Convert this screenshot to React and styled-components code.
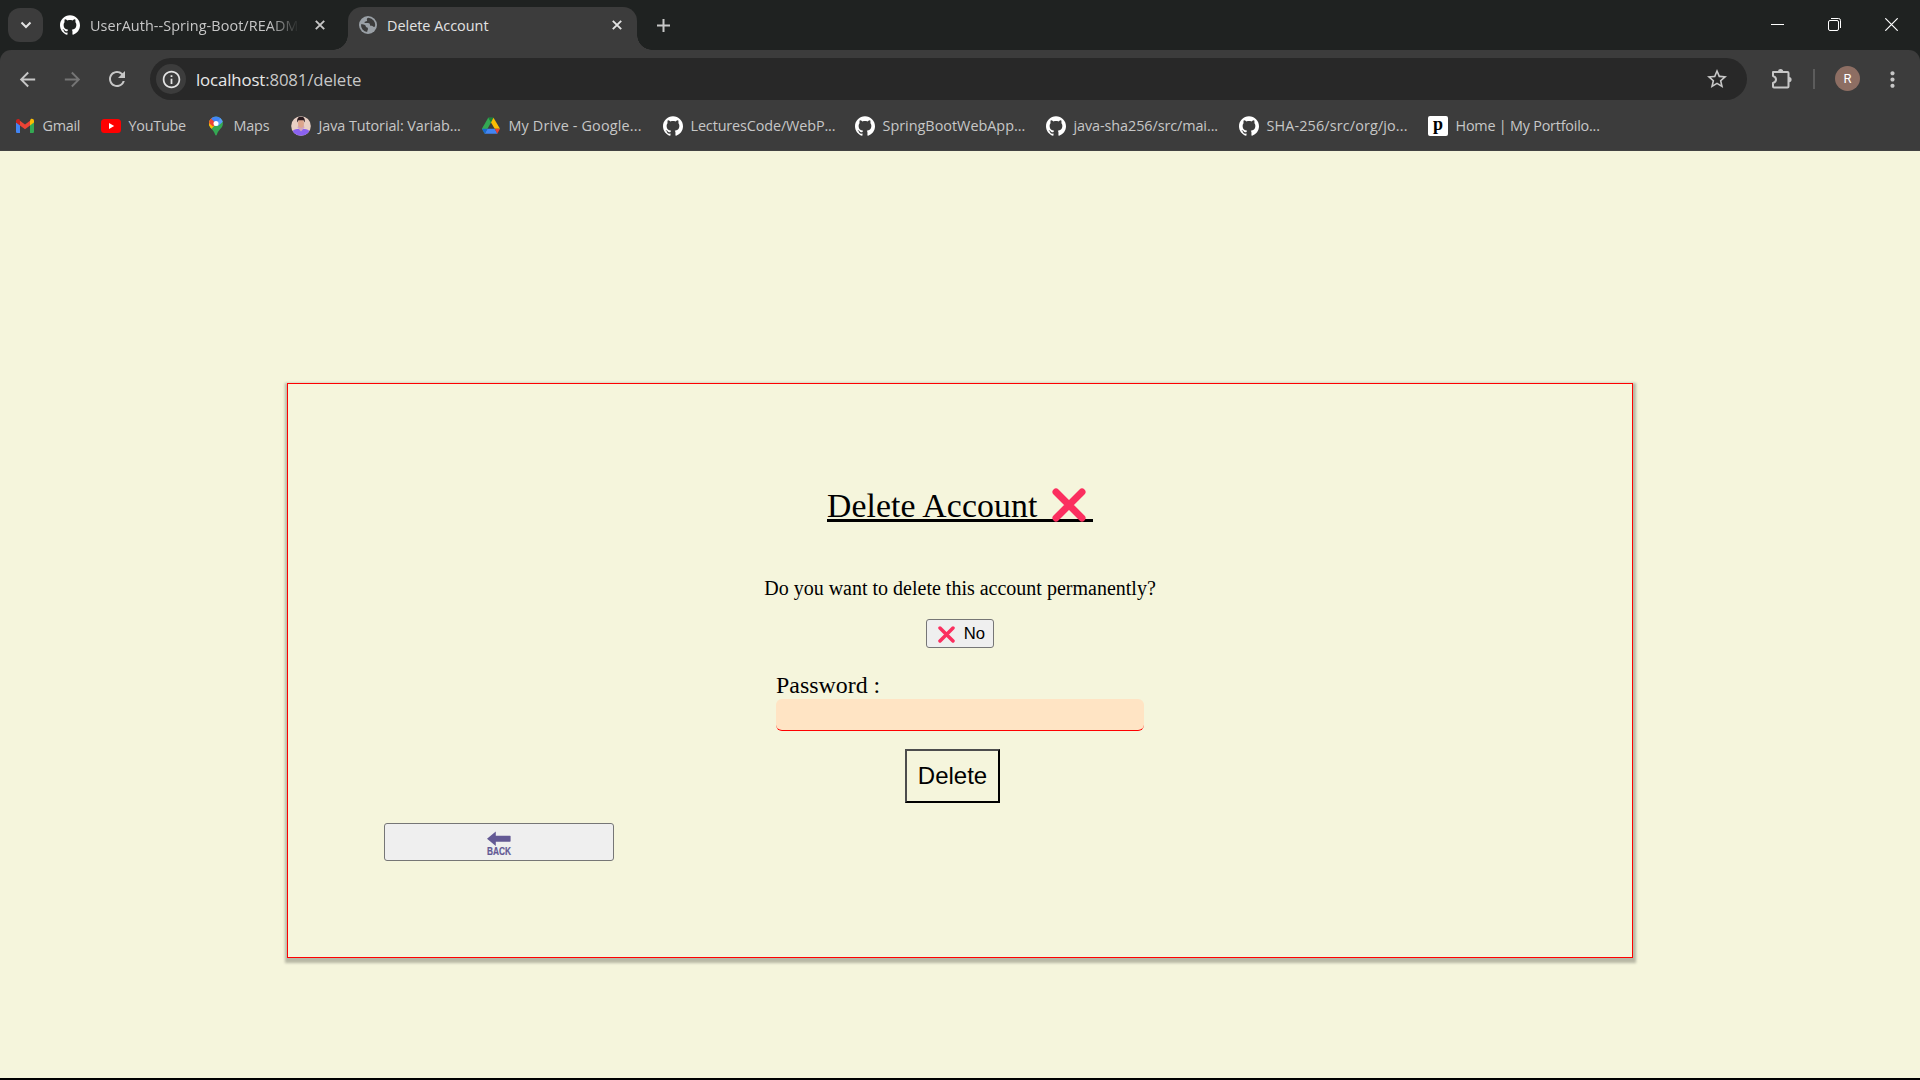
import React from "react";
import styled, { createGlobalStyle } from "styled-components";
import { SiGithub } from "react-icons/si";
import { MdArrowBack, MdArrowForward, MdRefresh, MdInfoOutline, MdStarBorder, MdMoreVert } from "react-icons/md";

const GlobalStyle = createGlobalStyle`
  *, *::before, *::after { box-sizing: border-box; }
  html, body { margin: 0; padding: 0; background: #000; }
  body { overflow: hidden; }
`;

const uiFont = `"Open Sans", "Noto Sans", sans-serif`;

const Screen = styled.div`
  width: 1920px;
  height: 1080px;
  display: flex;
  flex-direction: column;
  background: #000;
  overflow: hidden;
`;

const Chrome = styled.header`
  flex: none;
  height: 151px;
  background: #1f2221;
  font-family: ${uiFont};
  color: #c7c7c7;
`;

const TabStrip = styled.div`
  height: 50px;
  display: flex;
  padding-left: 8px;
`;

const TabSearch = styled.button`
  width: 35px;
  height: 34px;
  margin-top: 8px;
  padding: 0;
  border: 0;
  border-radius: 12px;
  background: #3c3c3c;
  display: grid;
  place-items: center;
`;

const Tab = styled.div`
  position: relative;
  display: flex;
  align-items: center;
  width: ${(p) => p.$width}px;
  height: ${(p) => (p.$active ? 43 : 50)}px;
  margin-top: ${(p) => (p.$active ? 7 : 0)}px;
  padding: ${(p) => (p.$active ? "0 10px 7px 11px" : "0 10px 0 17px")};
  background: ${(p) => (p.$active ? "#3c3c3c" : "transparent")};
  border-radius: 14px 14px 0 0;
  color: ${(p) => (p.$active ? "#e3e3e3" : "#c7c7c7")};

  &::before,
  &::after {
    content: "";
    display: ${(p) => (p.$active ? "block" : "none")};
    position: absolute;
    bottom: 0;
    width: 15px;
    height: 15px;
  }
  &::before {
    left: -15px;
    background: radial-gradient(circle at 0 0, transparent 14.5px, #3c3c3c 15px);
  }
  &::after {
    right: -15px;
    background: radial-gradient(circle at 100% 0, transparent 14.5px, #3c3c3c 15px);
  }
`;

const TabTitle = styled.span`
  flex: none;
  width: ${(p) => p.$width}px;
  margin-left: 10px;
  padding-top: 2px;
  overflow: hidden;
  white-space: nowrap;
  font-size: 14.4px;
  line-height: 24px;
  letter-spacing: ${(p) => p.$track}px;
  mask-image: ${(p) => (p.$fade ? "linear-gradient(90deg, #000 86%, transparent)" : "none")};
`;

const TabClose = styled.button`
  width: 20px;
  height: 20px;
  padding: 0;
  border: 0;
  background: transparent;
  margin-left: ${(p) => p.$gap}px;
  display: grid;
  place-items: center;
`;

const NewTab = styled(TabClose)`
  margin-top: 15px;
`;

const WindowControls = styled.div`
  margin-left: auto;
  display: flex;
`;

const WindowButton = styled.button`
  width: 57px;
  height: 49px;
  padding: 0;
  border: 0;
  background: transparent;
  display: grid;
  place-items: center;
`;

const Toolbar = styled.div`
  height: 58px;
  padding: 0 15px;
  display: flex;
  align-items: center;
  background: #3c3c3c;
  border-radius: 11px 11px 0 0;
`;

const NavIcon = styled.span`
  flex: none;
  display: grid;
  place-items: center;
  width: 24px;
  height: 24px;
  margin-right: 21px;
  color: ${(p) => (p.$dim ? "#757575" : "#c7c7c7")};
`;

const Omnibox = styled.div`
  flex: none;
  width: 1597px;
  height: 42px;
  padding: 0 18px 0 6px;
  display: flex;
  align-items: center;
  background: #282828;
  border-radius: 21px;
`;

const InfoBadge = styled.span`
  width: 30px;
  height: 30px;
  border-radius: 50%;
  background: #3c3c3c;
  color: #e3e3e3;
  display: grid;
  place-items: center;
`;

const Url = styled.span`
  margin-left: 10px;
  padding-top: 1px;
  flex: 1;
  font-size: 16.8px;
  line-height: 26px;
  letter-spacing: -0.13px;
  color: #c7c7c7;
  b { font-weight: 400; color: #e8e8e8; }
`;

const ToolbarEnd = styled.div`
  flex: 1;
  display: flex;
  align-items: center;
  padding-left: 24px;
`;

const Divider = styled.i`
  width: 2px;
  height: 20px;
  margin-left: 20px;
  background: #5c5c5c;
`;

const Avatar = styled.span`
  width: 25px;
  height: 25px;
  margin: -1px 0 0 20px;
  border-radius: 50%;
  background: #8d6e63;
  color: #fff;
  font: 13px/25px Roboto, sans-serif;
  text-align: center;
`;

const MenuIcon = styled.span`
  display: grid;
  margin-left: 20px;
  color: #c7c7c7;
`;

const Bookmarks = styled.div`
  height: 43px;
  padding: 0 0 6px 15px;
  display: flex;
  align-items: center;
  background: #3c3c3c;
  border-bottom: 1px solid #424242;
`;

const Bookmark = styled.div`
  flex: none;
  width: ${(p) => p.$width}px;
  display: flex;
  align-items: center;
  gap: 7.5px;
  white-space: nowrap;
  font-size: 14.4px;
  line-height: 22px;
  letter-spacing: ${(p) => p.$track}px;
  svg { flex: none; }
`;

const LetterIcon = styled.span`
  width: 20px;
  height: 20px;
  border-radius: 2px;
  background: #fff;
  color: #000;
  font: bold 18px/16px "Liberation Serif", serif;
  text-align: center;
  letter-spacing: 0;
`;

const Page = styled.main`
  flex: none;
  height: 927px;
  padding-top: 232px;
  background: beige;
  color: #000;
  font-family: "Liberation Serif", serif;
`;

const Card = styled.section`
  width: 1346px;
  height: 575px;
  margin: 0 auto;
  padding: 103px 96px 0;
  display: flex;
  flex-direction: column;
  align-items: center;
  border: 1px solid red;
  box-shadow: 0 2.5px 2.5px 2.5px rgba(0, 0, 0, 0.25);
`;

const Heading = styled.h1`
  width: 266px;
  height: 35px;
  margin: 0;
  display: flex;
  align-items: flex-end;
  justify-content: space-between;
  padding-right: 7px;
  border-bottom: 3px solid #000;
  font-size: 33.75px;
  font-weight: 400;
  line-height: 26px;
  letter-spacing: 0.1px;
  white-space: nowrap;
  svg { margin-bottom: -3px; }
`;

const Question = styled.p`
  margin: 54px 0 0;
  font-size: 20px;
  line-height: 24px;
`;

const NoButton = styled.button`
  width: 68px;
  height: 29px;
  margin-top: 19px;
  padding: 1px 8px 0 11px;
  display: flex;
  align-items: center;
  justify-content: space-between;
  border: 1px solid #767676;
  border-radius: 3px;
  background: #efefef;
  color: #000;
  font: 16.67px/20px "Liberation Sans", Arial, sans-serif;
`;

const Form = styled.form`
  width: 368px;
  margin-top: 22px;
  display: flex;
  flex-direction: column;
`;

const Label = styled.label`
  height: 29px;
  font-size: 23.9px;
  line-height: 31px;
`;

const Password = styled.input`
  width: 368px;
  height: 32px;
  border: 0;
  border-bottom: 1px solid red;
  border-radius: 6px;
  background: bisque;
  outline: 0;
`;

const DeleteButton = styled.button`
  width: 95px;
  height: 54px;
  margin: 18px 0 0 129px;
  padding: 0;
  border: 2px solid;
  border-color: #4d4d4d #000 #000 #4d4d4d;
  background: transparent;
  color: #000;
  font: 24px/28px "Liberation Sans", Arial, sans-serif;
`;

const BackButton = styled.button`
  align-self: flex-start;
  width: 230px;
  height: 38px;
  margin-top: 20px;
  padding: 0;
  display: grid;
  place-items: center;
  border: 1px solid #767676;
  border-radius: 3px;
  background: #efefef;
`;

const CrossMark = ({ size }) => (
  <svg width={size} height={size} viewBox="0 0 34 34">
    <path d="M4 4 30 30M30 4 4 30" stroke="#fb2f5f" strokeWidth="7" strokeLinecap="round" />
  </svg>
);

const CloseGlyph = ({ color }) => (
  <svg width="10" height="10" viewBox="0 0 10 10">
    <path d="M.8.8 9.2 9.2M9.2.8.8 9.2" stroke={color} strokeWidth="1.9" />
  </svg>
);

const Globe = () => (
  <svg width="18" height="18" viewBox="0 0 18 18">
    <circle cx="9" cy="9" r="9" fill="#9aa0a6" />
    <path d="M9.6 1.8C8 2 7.600 3.200 8 4.200c.3.900-.4 1.300-1.200 1.300-1.100 0-1.300.8-1.200 1.600H9c1.500 0 2 .9 2 1.900 0 .8.700 1 1.500.8.900-.2 1.300.300 1.600 1h1.800A7.200 7.200 0 0 0 9.600 1.800Z" fill="#3c3c3c" />
    <path d="M2 8.300c1.900 0 3.300.1 4.200 1 .8.800.5 1.700 1.200 1.900 1.500.2 1.700 1 1.500 2.200-.2.900-.8 1.300-.7 2.700A7.200 7.200 0 0 1 2 8.300Z" fill="#3c3c3c" />
  </svg>
);

const Gmail = () => (
  <svg width="20" height="20" viewBox="0 0 20 20">
    <path d="M1 6v9.700C1 16.500 1.600 17 2.300 17H5V8.900Z" fill="#4285f4" />
    <path d="M15 8.900V17h2.700c.7 0 1.300-.5 1.300-1.300V6Z" fill="#34a853" />
    <path d="M15 4.700v4.700l4-3V5c0-2-2.100-2.700-3.400-1.700Z" fill="#fbbc04" />
    <path d="M5 9.400V4.700l5 3.800 5-3.800v4.700l-5 3.800Z" fill="#ea4335" />
    <path d="M1 5v1.400l4 3V4.700l-.6-1.400C3 2.300 1 3.200 1 5Z" fill="#c5221f" />
  </svg>
);

const YouTube = () => (
  <svg width="20" height="20" viewBox="0 0 20 20">
    <rect y="3" width="20" height="14" rx="3.500" fill="#f00" />
    <path d="m8 7 5.200 3L8 13Z" fill="#fff" />
  </svg>
);

const Maps = () => (
  <svg width="20" height="20" viewBox="0 0 20 20">
    <defs>
      <clipPath id="pin">
        <path d="M10 .5a6.900 6.900 0 0 0-6.900 6.900c0 4.800 4.500 5.800 6 11 .3 1.400 1.500 1.400 1.800 0 1.500-5.200 6-6.200 6-11A6.900 6.900 0 0 0 10 .5Z" />
      </clipPath>
    </defs>
    <g clipPath="url(#pin)">
      <path d="M0 0h20v20H0Z" fill="#34a853" />
      <path d="M2 3 10 8 3 15.500H0V3Z" fill="#fbbc04" />
      <path d="M0 6 5 2l5 5.400-4.800 5Z" fill="#fbbc04" />
      <path d="M0 0h6l4.500 7L7 10.500 2 6Z" fill="#ea4335" />
      <path d="M5 2.500 7 0h9l-1 3.500-5 4Z" fill="#4285f4" />
      <path d="M14.800 2 8 9.800 12 10l6-5Z" fill="#5b9bf8" />
    </g>
    <circle cx="10" cy="7.400" r="2.500" fill="#fff" />
  </svg>
);

const Portrait = () => (
  <svg width="20" height="20" viewBox="0 0 20 20">
    <defs>
      <clipPath id="face"><circle cx="10" cy="10" r="9.800" /></clipPath>
    </defs>
    <g clipPath="url(#face)">
      <path d="M0 0h20v20H0Z" fill="#e9d0c4" />
      <path d="M0 20c0-5 3-6.500 6-7h8c3 .5 6 2 6 7Z" fill="#8a62f0" />
      <path d="m6.500 11.500 3.500 4 3.500-4-1-2.500h-5Z" fill="#cfa3c0" />
      <ellipse cx="10" cy="7.600" rx="3" ry="4.200" fill="#dca58c" />
      <path d="M6.300 6.500C5.600 2 7.500.8 10 .8s4.400 1.200 3.700 5.700L12.500 4.200h-5Z" fill="#2b1b20" />
    </g>
  </svg>
);

const Drive = () => (
  <svg width="20" height="20" viewBox="0 0 20 20">
    <path d="M7.200 1.800h5.300L10 6.400 6.500 12.800 3.700 17.800.9 12.800Z" fill="#34a853" />
    <path d="M7.200 1.800h5.300L10 6.400Z" fill="#188038" />
    <path d="m12.500 1.800 6.500 11h-5.300L10 6.400Z" fill="#fbbc04" />
    <path d="M6.500 12.800h7.200l2.800 5H3.700Z" fill="#4285f4" />
    <path d="M.9 12.800h5.600l-2.800 5Z" fill="#1967d2" />
    <path d="M13.700 12.800H19l-2.700 5Z" fill="#ea4335" />
  </svg>
);

const Github = () => <SiGithub size={20} color="#fff" />;

const Extensions = () => (
  <svg width="22" height="22" viewBox="0 0 22 22" fill="none">
    <path d="M2 4h14.500q1 0 1 1v13.500q0 1-1 1H3q-1 0-1-1V15c4-1.200 4-5.800 0-7Z" stroke="#c7c7c7" strokeWidth="2" strokeLinejoin="round" />
    <path d="M7 3.500a2.600 2.600 0 0 1 5.200 0ZM18 9a2.600 2.600 0 0 1 0 5.200Z" fill="#c7c7c7" />
  </svg>
);

const BackArrow = () => (
  <svg width="26" height="36" viewBox="0 0 26 36">
    <path d="M1 14.700 9.800 7.500V11.700h14.200q.6 0 .6.600v4.800q0 .6-.6.600H9.800v4.200Z" fill="#635994" />
    <text x="1" y="31" textLength="24" lengthAdjust="spacingAndGlyphs" fill="#635994" stroke="#635994" strokeWidth=".2" fontFamily="Liberation Sans, Arial, sans-serif" fontWeight="700" fontSize="10.400">BACK</text>
  </svg>
);

const bookmarks = [
  { label: "Gmail", icon: Gmail, width: 86, track: -0.3 },
  { label: "YouTube", icon: YouTube, width: 105, track: -0.25 },
  { label: "Maps", icon: Maps, width: 85, track: -0.2 },
  { label: "Java Tutorial: Variab...", icon: Portrait, width: 190, track: -0.08 },
  { label: "My Drive - Google...", icon: Drive, width: 182, track: 0.16 },
  { label: "LecturesCode/WebP...", icon: Github, width: 192, track: -0.12 },
  { label: "SpringBootWebApp...", icon: Github, width: 191, track: 0 },
  { label: "java-sha256/src/mai...", icon: Github, width: 193, track: -0.08 },
  { label: "SHA-256/src/org/jo...", icon: Github, width: 189, track: 0.13 },
  { label: "Home | My Portfoilo...", icon: () => <LetterIcon>p</LetterIcon>, width: 180, track: -0.22 },
];

export default function App() {
  return (
    <Screen>
      <GlobalStyle />
      <Chrome>
        <TabStrip>
          <TabSearch>
            <svg width="12" height="8" viewBox="0 0 12 8" fill="none">
              <path d="m1.500 1.500 4.500 4.500 4.500-4.500" stroke="#e3e3e3" strokeWidth="2" />
            </svg>
          </TabSearch>
          <Tab $width={305}>
            <Github />
            <TabTitle $width={209} $track={0.08} $fade>UserAuth--Spring-Boot/README</TabTitle>
            <TabClose $gap={11}><CloseGlyph color="#c7c7c7" /></TabClose>
          </Tab>
          <Tab $width={289} $active>
            <Globe />
            <TabTitle $width={200} $track={0}>Delete Account</TabTitle>
            <TabClose $gap={20}><CloseGlyph color="#e3e3e3" /></TabClose>
          </Tab>
          <NewTab $gap={16}>
            <svg width="13" height="13" viewBox="0 0 13 13"><path d="M6.500 0v13M0 6.500h13" stroke="#c7c7c7" strokeWidth="2" /></svg>
          </NewTab>
          <WindowControls>
            <WindowButton>
              <svg width="13" height="13" viewBox="0 0 13 13"><path d="M0 6.500h13" stroke="#fff" /></svg>
            </WindowButton>
            <WindowButton>
              <svg width="13" height="13" viewBox="0 0 13 13" fill="none" stroke="#fff">
                <rect x=".5" y="2.500" width="10" height="10" rx="1.500" />
                <path d="M3 .5h7.500a2 2 0 0 1 2 2V10" />
              </svg>
            </WindowButton>
            <WindowButton>
              <svg width="13" height="13" viewBox="0 0 13 13"><path d="m.3.300 12.400 12.400M12.700.3.300 12.700" stroke="#fff" strokeWidth="1.200" /></svg>
            </WindowButton>
          </WindowControls>
        </TabStrip>
        <Toolbar>
          <NavIcon><MdArrowBack size={23} /></NavIcon>
          <NavIcon $dim><MdArrowForward size={23} /></NavIcon>
          <NavIcon><MdRefresh size={24} /></NavIcon>
          <Omnibox>
            <InfoBadge><MdInfoOutline size={21} /></InfoBadge>
            <Url><b>localhost</b>:8081/delete</Url>
            <MdStarBorder size={24} color="#c7c7c7" />
          </Omnibox>
          <ToolbarEnd>
            <Extensions />
            <Divider />
            <Avatar>R</Avatar>
            <MenuIcon><MdMoreVert size={25} /></MenuIcon>
          </ToolbarEnd>
        </Toolbar>
        <Bookmarks>
          {bookmarks.map(({ label, icon: Icon, width, track }) => (
            <Bookmark key={label} $width={width} $track={track}>
              <Icon />
              <span>{label}</span>
            </Bookmark>
          ))}
        </Bookmarks>
      </Chrome>
      <Page>
        <Card>
          <Heading>Delete Account <CrossMark size={34} /></Heading>
          <Question>Do you want to delete this account permanently?</Question>
          <NoButton><CrossMark size={17} />No</NoButton>
          <Form>
            <Label htmlFor="password">Password :</Label>
            <Password id="password" type="password" />
            <DeleteButton type="button">Delete</DeleteButton>
          </Form>
          <BackButton aria-label="Back"><BackArrow /></BackButton>
        </Card>
      </Page>
    </Screen>
  );
}
